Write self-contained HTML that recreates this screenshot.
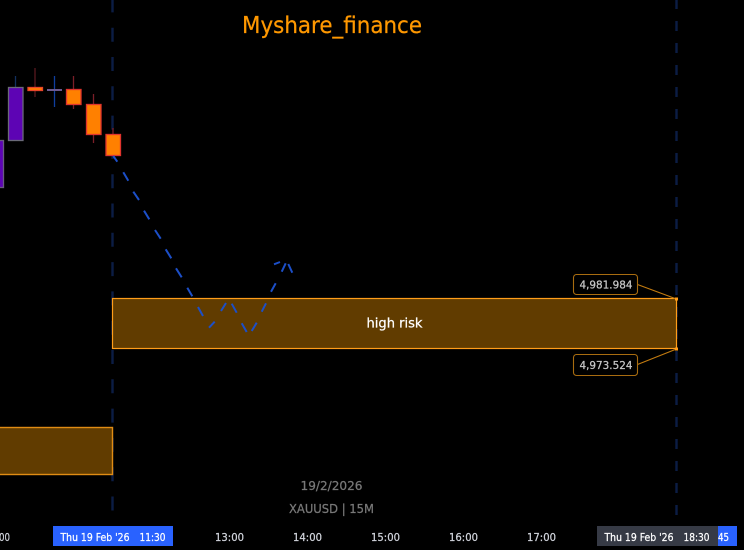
<!DOCTYPE html>
<html><head><meta charset="utf-8"><style>
html,body{margin:0;padding:0;background:#fff;width:744px;height:557px;overflow:hidden}
svg{display:block}
text{font-family:"DejaVu Sans","Liberation Sans",sans-serif}
</style></head><body>
<svg width="744" height="557" viewBox="0 0 744 557" xmlns="http://www.w3.org/2000/svg">
<rect width="744" height="550" fill="#000"/>
<!-- vertical dashed lines -->
<line x1="112.5" y1="-1.6" x2="112.5" y2="512" stroke="#0b1d45" stroke-width="2.4" stroke-dasharray="14 15.3"/>
<line x1="676.5" y1="-1" x2="676.5" y2="516" stroke="#0b1d45" stroke-width="2.4" stroke-dasharray="10 12"/>
<!-- candles -->
<rect x="-3" y="140.5" width="6.5" height="47" fill="#5d04b4" stroke="#6a5a80" stroke-width="1.3"/>
<line x1="15.5" y1="76" x2="15.5" y2="87" stroke="#12305f" stroke-width="1.3"/>
<rect x="8.5" y="87.5" width="14.5" height="53" fill="#5d04b4" stroke="#6a6a78" stroke-width="1.3"/>
<line x1="35" y1="68" x2="35" y2="97" stroke="#5a1a20" stroke-width="1.3"/>
<rect x="28" y="87.5" width="14.5" height="3" fill="#ff8000" stroke="#e8452a" stroke-width="1.3"/>
<line x1="54.5" y1="76" x2="54.5" y2="107" stroke="#0f3f9f" stroke-width="1.3"/>
<rect x="47" y="89" width="15" height="2" fill="#6c5a90"/>
<line x1="73.5" y1="76" x2="73.5" y2="109" stroke="#7c1f28" stroke-width="1.3"/>
<rect x="66.5" y="89.5" width="14.5" height="15" fill="#ff8000" stroke="#e0342e" stroke-width="1.3"/>
<line x1="93.5" y1="94" x2="93.5" y2="143" stroke="#7c1f28" stroke-width="1.3"/>
<rect x="86.5" y="104.5" width="14.5" height="30" fill="#ff8000" stroke="#e0342e" stroke-width="1.3"/>
<line x1="113" y1="128" x2="113" y2="135" stroke="#7c1f28" stroke-width="1.3"/>
<rect x="106" y="134.5" width="14.5" height="21" fill="#ff8000" stroke="#e0342e" stroke-width="1.3"/>
<!-- boxes -->
<rect x="112.5" y="298.5" width="564" height="50" fill="#613c00" stroke="#ff9d1a" stroke-width="1.2"/>
<rect x="-5" y="427.5" width="117.5" height="47" fill="#613c00" stroke="#e08c14" stroke-width="1.4"/>
<!-- blue dashed path -->
<g stroke="#1c4fc8" stroke-width="2" stroke-linecap="butt" fill="none">
<path d="M113.3 156L117.3 161.7M123.3 172.3L128.3 180.7M133.3 191.7L139 200M144 210.7L149.3 219.3M155 230L160.7 238.7M165.7 249.3L171.3 258.3M176 268.3L181.7 277.3M187.3 287.7L192.3 296.3M198 307L203 316M209 327.7L214.7 321.7M221 311L226 303M231.7 303.7L236.7 312.7M241.7 323.3L246.7 332M251.7 331L256.7 322.7M261.7 311.7L266 303.3M271 291.7L275.7 283.3M281.7 271.7L285.7 263.3M274 264.3L280 262M288.3 264L292.3 272.7"/>
</g>
<!-- connectors and labels -->
<line x1="637.5" y1="284.5" x2="676.5" y2="299" stroke="#c47c10" stroke-width="1.1"/>
<line x1="637.5" y1="364.5" x2="676.5" y2="349" stroke="#c47c10" stroke-width="1.1"/>
<rect x="675" y="297.5" width="3" height="3" fill="#ff9d1a"/>
<rect x="675" y="347.5" width="3" height="3" fill="#ff9d1a"/>
<rect x="573.5" y="274.5" width="64" height="20" rx="3" fill="#000" stroke="#a86c10" stroke-width="1.1"/>
<rect x="573.5" y="354.5" width="64" height="21" rx="3" fill="#000" stroke="#a86c10" stroke-width="1.1"/>
<g stroke-width="0.25">
<text x="579.5" y="288.5" font-size="11" fill="#c8c8c8" stroke="#c8c8c8" textLength="53" lengthAdjust="spacingAndGlyphs">4,981.984</text>
<text x="579.5" y="369" font-size="11" fill="#c8c8c8" stroke="#c8c8c8" textLength="53" lengthAdjust="spacingAndGlyphs">4,973.524</text>
<text x="242" y="33" font-size="23" fill="#ff9800" stroke="#ff9800" textLength="180" lengthAdjust="spacingAndGlyphs">Myshare_finance</text>
<text x="366.5" y="327.5" font-size="13" fill="#fff" stroke="#fff" textLength="56" lengthAdjust="spacingAndGlyphs">high risk</text>
<text x="300.5" y="490" font-size="12" fill="#787878" stroke="#787878" textLength="62" lengthAdjust="spacingAndGlyphs">19/2/2026</text>
<text x="289" y="513" font-size="12" fill="#787878" stroke="#787878" textLength="85" lengthAdjust="spacingAndGlyphs">XAUUSD | 15M</text>
</g>
<!-- axis -->
<rect x="53" y="526" width="120" height="20" fill="#2962ff"/>
<rect x="597" y="526" width="121" height="20" fill="#363a45"/>
<rect x="718" y="526" width="19" height="20" fill="#2962ff"/>
<g font-size="11" fill="#d1d4dc" stroke="#d1d4dc" stroke-width="0.25">
<text x="-1" y="541" textLength="11" lengthAdjust="spacingAndGlyphs">00</text>
<text x="215" y="541" textLength="29" lengthAdjust="spacingAndGlyphs">13:00</text>
<text x="293" y="541" textLength="29" lengthAdjust="spacingAndGlyphs">14:00</text>
<text x="371" y="541" textLength="29" lengthAdjust="spacingAndGlyphs">15:00</text>
<text x="449" y="541" textLength="29" lengthAdjust="spacingAndGlyphs">16:00</text>
<text x="527" y="541" textLength="29" lengthAdjust="spacingAndGlyphs">17:00</text>
</g>
<g font-size="11" fill="#fff" stroke="#fff" stroke-width="0.25">
<text x="60.5" y="541" textLength="69" lengthAdjust="spacingAndGlyphs">Thu 19 Feb '26</text>
<text x="139.5" y="541" textLength="26" lengthAdjust="spacingAndGlyphs">11:30</text>
<text x="604.5" y="541" textLength="69" lengthAdjust="spacingAndGlyphs">Thu 19 Feb '26</text>
<text x="683.5" y="541" textLength="26" lengthAdjust="spacingAndGlyphs">18:30</text>
<text x="718" y="541" textLength="11" lengthAdjust="spacingAndGlyphs">45</text>
</g>
</svg>
</body></html>
